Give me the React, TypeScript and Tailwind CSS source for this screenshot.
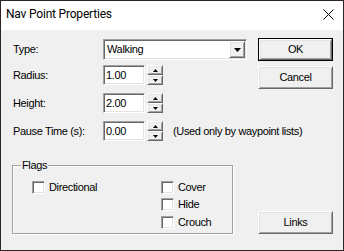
import React from "react";

const raised =
  "border border-t-white border-l-white border-r-[#696969] border-b-[#696969] shadow-[inset_1px_1px_#e3e3e3,inset_-1px_-1px_#a0a0a0] bg-[#f0f0f0]";
const sunken =
  "border border-t-[#a0a0a0] border-l-[#a0a0a0] border-r-white border-b-white shadow-[inset_1px_1px_#696969,inset_-1px_-1px_#e3e3e3] bg-white";

function Button({ label, def }: { label: string; def?: boolean }) {
  if (def) {
    return (
      <div className="w-[75px] h-[23px] border border-black">
        <div className={`${raised} w-full h-full flex items-center justify-center`}>{label}</div>
      </div>
    );
  }
  return (
    <div className={`${raised} w-[75px] h-[23px] flex items-center justify-center`}>{label}</div>
  );
}

function Spinner() {
  return (
    <div className="ml-[2px] w-[16px] h-[20px] shrink-0 flex flex-col">
      <div className={`${raised} h-[10px] flex items-center justify-center`}>
        <svg width="5" height="3" viewBox="0 0 5 3">
          <path d="M2.5 0 L5 3 L0 3 Z" fill="#000" />
        </svg>
      </div>
      <div className={`${raised} h-[10px] flex items-center justify-center`}>
        <svg width="5" height="3" viewBox="0 0 5 3">
          <path d="M0 0 L5 0 L2.5 3 Z" fill="#000" />
        </svg>
      </div>
    </div>
  );
}

function NumRow({ label, value, note, className }: { label: string; value: string; note?: string; className: string }) {
  return (
    <div className={`flex items-center h-[20px] whitespace-nowrap ${className}`}>
      <div className="w-[90px] ml-[1px] shrink-0">{label}</div>
      <div className={`${sunken} w-[42px] h-[20px] shrink-0 flex items-center pl-[2px]`}>{value}</div>
      <Spinner />
      {note && <div className="ml-[10px] shrink-0">{note}</div>}
    </div>
  );
}

function Check({ label, className }: { label: string; className?: string }) {
  return (
    <div className={`flex items-center h-[13px] whitespace-nowrap ${className ?? ""}`}>
      <div className={`${sunken} w-[13px] h-[13px] shrink-0`} />
      <div className="ml-[4px]">{label}</div>
    </div>
  );
}

export default function App() {
  return (
    <div
      className="w-[344px] h-[251px] border border-[#2f2222] flex flex-col bg-[#f0f0f0] text-black text-[11px] leading-[13px] tracking-[-0.35px]"
      style={{ fontFamily: '"Liberation Sans", Arial, sans-serif' }}
    >
      <div className="h-[29px] bg-white flex items-center justify-between pl-[5px] pr-[9px] pb-[3px]">
        <span className="text-[12px] leading-[16px] tracking-[-0.2px]" style={{ fontFamily: 'Roboto, sans-serif' }}>
          Nav Point Properties
        </span>
        <svg width="11" height="11" viewBox="0 0 11 11">
          <path d="M0.5 0.5 L10.5 10.5 M10.5 0.5 L0.5 10.5" stroke="#000" strokeWidth="1" />
        </svg>
      </div>
      <div className="flex-1 flex">
        <div className="w-[257px] shrink-0 pl-[11px] flex flex-col">
          <div className="flex items-center h-[21px] mt-[9px]">
            <div className="w-[90px] ml-[1px] shrink-0">Type:</div>
            <div className={`${sunken} w-[144px] h-[21px] shrink-0 flex items-center justify-between p-[1px]`}>
              <span className="pl-[2px]">Walking</span>
              <div className={`${raised} w-[16px] h-full flex items-center justify-center`}>
                <svg width="7" height="4" viewBox="0 0 7 4">
                  <path d="M0 0 L7 0 L3.5 4 Z" fill="#000" />
                </svg>
              </div>
            </div>
          </div>
          <NumRow label="Radius:" value="1.00" className="mt-[5px]" />
          <NumRow label="Height:" value="2.00" className="mt-[8px]" />
          <NumRow label="Pause Time (s):" value="0.00" note="(Used only by waypoint lists)" className="mt-[8px]" />
          <div className="relative mt-[24px] w-[221px] h-[69px] border border-[#a0a0a0] shadow-[inset_1px_1px_white,1px_1px_white]">
            <div className="absolute left-[8px] top-[-7px] px-[1px] bg-[#f0f0f0]">Flags</div>
            <div className="flex pt-[15px] pl-[19px]">
              <div className="w-[129px] shrink-0">
                <Check label="Directional" />
              </div>
              <div className="flex flex-col">
                <Check label="Cover" />
                <Check label="Hide" className="mt-[4px]" />
                <Check label="Crouch" className="mt-[5px]" />
              </div>
            </div>
          </div>
        </div>
        <div className="w-[75px] shrink-0 flex flex-col">
          <div className="mt-[8px]">
            <Button label="OK" def />
          </div>
          <div className="mt-[5px]">
            <Button label="Cancel" />
          </div>
          <div className="mt-[122px]">
            <Button label="Links" />
          </div>
        </div>
      </div>
    </div>
  );
}
